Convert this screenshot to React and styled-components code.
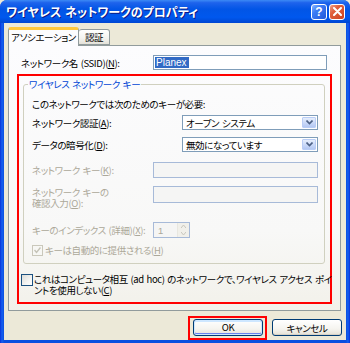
import React from 'react';
import styled, { createGlobalStyle } from 'styled-components';

const GlobalStyle = createGlobalStyle`
  html, body {
    margin: 0;
    padding: 0;
    background: #ece9d8;
  }
  body {
    font-family: "Noto Sans CJK JP", "Noto Sans", sans-serif;
    font-size: 9.5px;
    letter-spacing: -0.4px;
    word-spacing: 1px;
    font-feature-settings: "palt";
    color: #000;
  }
  * { box-sizing: border-box; }
`;

const Window = styled.div`
  width: 350px;
  height: 343px;
  display: flex;
  flex-direction: column;
  background: linear-gradient(90deg, #0831d9 0, #1560f0 2px, #0a4fe0 4px, #0a4fe0 346px, #1560f0 348px, #0831d9 350px);
  border-radius: 7px 7px 0 0;
  overflow: hidden;
`;

const TitleBar = styled.div`
  height: 23px;
  flex: none;
  display: flex;
  align-items: center;
  padding: 0 5px 0 6px;
  background: linear-gradient(180deg, #3c8af5 0%, #1e63ec 12%, #0255e6 40%, #0058ee 75%, #0046d2 100%);
`;

const Title = styled.div`
  flex: 1;
  color: #fff;
  font-size: 12px;
  font-weight: bold;
  letter-spacing: 0;
  text-shadow: 1px 1px 0 #0a1b88;
  white-space: nowrap;
`;

const CaptionButton = styled.div`
  width: 16px;
  height: 16px;
  margin-left: 2px;
  border: 1px solid #fff;
  border-radius: 3px;
  display: flex;
  align-items: center;
  justify-content: center;
  color: #fff;
  font-family: "Liberation Sans", sans-serif;
  font-weight: bold;
  font-size: 12px;
  letter-spacing: 0;
  background: ${({ $close }) =>
    $close
      ? 'linear-gradient(135deg, #f0a08a 0%, #e0603d 35%, #cc4220 100%)'
      : 'linear-gradient(135deg, #8cb8ff 0%, #3b7cf6 35%, #2358d8 100%)'};
`;

const Body = styled.div`
  flex: 1;
  margin: 0 4px 3px 4px;
  background: #ece9d8;
  padding: 5px 0 0 4px;
  display: flex;
  flex-direction: column;
`;

const TabRow = styled.div`
  height: 17px;
  display: flex;
  align-items: flex-end;
`;

const Tab = styled.div`
  position: relative;
  z-index: ${({ $active }) => ($active ? 1 : 0)};
  width: ${({ $active }) => ($active ? '71px' : '31px')};
  height: ${({ $active }) => ($active ? '19px' : '16px')};
  margin-bottom: ${({ $active }) => ($active ? '-1px' : '0')};
  padding: 1px 0 0 0;
  text-align: center;
  border: 1px solid #919b9c;
  border-bottom: ${({ $active }) => ($active ? 'none' : '1px solid #919b9c')};
  border-left: ${({ $active }) => ($active ? '1px solid #919b9c' : 'none')};
  border-top: ${({ $active }) => ($active ? '3px solid #ffc83c' : '1px solid #919b9c')};
  border-radius: 3px 3px 0 0;
  background: ${({ $active }) => ($active ? '#fcfcfe' : 'linear-gradient(180deg, #fff 0%, #f3f3ef 60%, #e3e1d8 100%)')};
  line-height: 13px;
  white-space: nowrap;
`;

const Panel = styled.div`
  width: 333px;
  height: 266px;
  border: 1px solid #919b9c;
  background: linear-gradient(180deg, #fcfcfe 0%, #f8f8f7 70%, #f2f1ea 100%);
  padding: 9px 8px 6px 8px;
  display: flex;
  flex-direction: column;
`;

const SsidRow = styled.div`
  display: flex;
  align-items: center;
  height: 15px;
  padding: 0 5px 0 4px;
`;

const Label = styled.div`
  width: ${({ $w }) => $w}px;
  flex: none;
  white-space: nowrap;
  line-height: ${({ $lh }) => $lh || 12}px;
  color: ${({ $disabled }) => ($disabled ? '#aca899' : '#000')};
  padding-top: ${({ $pt }) => $pt || 0}px;
`;

const TextBox = styled.div`
  flex: ${({ $w }) => ($w ? 'none' : '1')};
  width: ${({ $w }) => ($w ? `${$w}px` : 'auto')};
  height: ${({ $h }) => $h || 16}px;
  border: 1px solid ${({ $disabled }) => ($disabled ? '#a7bad8' : '#7f9db9')};
  background: ${({ $disabled }) => ($disabled ? '#f5f5f4' : '#fff')};
  display: flex;
  align-items: center;
  padding-left: 1px;
`;

const Selected = styled.span`
  background: #316ac5;
  color: #fff;
  padding: 0 2px 0 1px;
  line-height: 11px;
  font-family: "Liberation Sans", sans-serif;
  font-size: 10px;
  letter-spacing: 0;
`;

const RedBox = styled.div`
  flex: 1;
  margin-top: 4px;
  border: 2px solid #ff0000;
  padding: 2px 5px 0 4px;
  display: flex;
  flex-direction: column;
`;

const Group = styled.fieldset`
  margin: 0;
  padding: 0 6px 7px 8px;
  border: 1px solid #d0d0bf;
  border-radius: 3px;
  display: flex;
  flex-direction: column;
`;

const Legend = styled.legend`
  margin-left: -4px;
  padding: 0 1px;
  color: #0046d5;
  line-height: 12px;
`;

const Intro = styled.div`
  margin-top: 8px;
  line-height: 12px;
  white-space: nowrap;
`;

const Row = styled.div`
  display: flex;
  align-items: ${({ $top }) => ($top ? 'flex-start' : 'center')};
  margin-top: ${({ $mt }) => $mt}px;
`;

const Select = styled.div`
  flex: 1;
  height: 15px;
  border: 1px solid #7f9db9;
  background: #fff;
  display: flex;
  align-items: center;
  padding: 1px 1px 1px 3px;
`;

const SelectText = styled.div`
  flex: 1;
  line-height: 12px;
  white-space: nowrap;
`;

const ArrowBtn = styled.div`
  width: 14px;
  height: 100%;
  border: 1px solid #b9cdf6;
  border-radius: 1px;
  background: linear-gradient(180deg, #e6eefc 0%, #c7d7f8 60%, #b4c8f3 100%);
  display: flex;
  align-items: center;
  justify-content: center;
`;

const SpinValue = styled.span`
  color: #aca899;
  padding-left: 3px;
  font-family: "Liberation Sans", sans-serif;
  letter-spacing: 0;
`;

const SpinArrows = styled.div`
  margin-left: auto;
  width: 12px;
  height: 100%;
  border-left: 1px solid #e8e7e0;
  display: flex;
  flex-direction: column;
  align-items: center;
  justify-content: space-around;
  background: #f1f0ea;
`;

const CheckRow = styled.div`
  display: flex;
  align-items: ${({ $top }) => ($top ? 'flex-start' : 'center')};
  margin-top: ${({ $mt }) => $mt}px;
  margin-left: ${({ $ml }) => $ml || 0}px;
  color: ${({ $disabled }) => ($disabled ? '#aca899' : '#000')};
`;

const CheckBox = styled.div`
  width: ${({ $s }) => $s}px;
  height: ${({ $s }) => $s}px;
  flex: none;
  border: 1px solid ${({ $disabled }) => ($disabled ? '#cac8bb' : '#1c5180')};
  background: ${({ $disabled }) => ($disabled ? '#f7f7f4' : 'linear-gradient(135deg, #dcdcd7 0%, #f4f4f2 60%, #fff 100%)')};
  display: flex;
  align-items: center;
  justify-content: center;
  margin-right: ${({ $mr }) => $mr}px;
`;

const CheckText = styled.div`
  line-height: ${({ $lh }) => $lh}px;
  white-space: nowrap;
`;

const ButtonRow = styled.div`
  display: flex;
  justify-content: flex-end;
  align-items: center;
  gap: 5px;
  margin-top: 5px;
  padding-right: 4px;
  height: 23px;
`;

const Highlight = styled.div`
  border: 2px solid #ff0000;
  padding: 1px 2px 2px 3px;
`;

const Button = styled.div`
  width: 70px;
  height: 17px;
  border: 1px solid #003c74;
  border-radius: 3px;
  background: linear-gradient(180deg, #ffffff 0%, #f5f4ef 60%, #e4e1d6 100%);
  box-shadow: ${({ $default }) =>
    $default ? 'inset 0 0 0 1px #cee7ff, inset 0 -1px 0 1px #6982ee, inset 0 1px 0 1px #cee7ff' : 'inset 0 -1px 0 #d6d0c5'};
  display: flex;
  align-items: center;
  justify-content: center;
  line-height: 12px;
`;

const Chevron = () => (
  <svg width="7" height="5" viewBox="0 0 7 5">
    <path d="M0.5 0.5 L3.5 3.5 L6.5 0.5" fill="none" stroke="#4d6185" strokeWidth="1.6" />
  </svg>
);

const Check = ({ color }) => (
  <svg width="7" height="7" viewBox="0 0 7 7">
    <path d="M0.5 3 L2.5 5.5 L6.5 0.5" fill="none" stroke={color} strokeWidth="1.4" />
  </svg>
);

const SpinTri = ({ up }) => (
  <svg width="5" height="3" viewBox="0 0 5 3">
    <path d={up ? 'M0 3 L2.5 0 L5 3' : 'M0 0 L2.5 3 L5 0'} fill="none" stroke="#c8c6bc" strokeWidth="1" />
  </svg>
);

export default function App() {
  return (
    <>
      <GlobalStyle />
      <Window>
        <TitleBar>
          <Title>ワイヤレス ネットワークのプロパティ</Title>
          <CaptionButton>?</CaptionButton>
          <CaptionButton $close>
            <svg width="9" height="9" viewBox="0 0 9 9">
              <path d="M1 1 L8 8 M8 1 L1 8" stroke="#fff" strokeWidth="2" strokeLinecap="round" />
            </svg>
          </CaptionButton>
        </TitleBar>
        <Body>
          <TabRow>
            <Tab $active>アソシエーション</Tab>
            <Tab>認証</Tab>
          </TabRow>
          <Panel>
            <SsidRow>
              <Label $w={132}>ネットワーク名 (SSID)(<u>N</u>):</Label>
              <TextBox $h={15}>
                <Selected>Planex</Selected>
              </TextBox>
            </SsidRow>
            <RedBox>
              <Group>
                <Legend>ワイヤレス ネットワーク キー</Legend>
                <Intro>このネットワークでは次のためのキーが必要:</Intro>
                <Row $mt={5}>
                  <Label $w={150}>ネットワーク認証(<u>A</u>):</Label>
                  <Select>
                    <SelectText>オープン システム</SelectText>
                    <ArrowBtn><Chevron /></ArrowBtn>
                  </Select>
                </Row>
                <Row $mt={7}>
                  <Label $w={150}>データの暗号化(<u>D</u>):</Label>
                  <Select>
                    <SelectText>無効になっています</SelectText>
                    <ArrowBtn><Chevron /></ArrowBtn>
                  </Select>
                </Row>
                <Row $mt={10}>
                  <Label $w={121} $disabled>ネットワーク キー(<u>K</u>):</Label>
                  <TextBox $disabled $h={16} />
                </Row>
                <Row $mt={8} $top>
                  <Label $w={121} $disabled $lh={11} $pt={1}>
                    ネットワーク キーの<br />確認入力(<u>O</u>):
                  </Label>
                  <TextBox $disabled $h={17} />
                </Row>
                <Row $mt={13}>
                  <Label $w={121} $disabled>キーのインデックス (詳細)(<u>X</u>):</Label>
                  <TextBox $disabled $w={37} $h={16}>
                    <SpinValue>1</SpinValue>
                    <SpinArrows>
                      <SpinTri up />
                      <SpinTri />
                    </SpinArrows>
                  </TextBox>
                </Row>
                <CheckRow $mt={7} $disabled>
                  <CheckBox $s={11} $mr={2} $disabled>
                    <Check color="#c4c2b6" />
                  </CheckBox>
                  <CheckText $lh={11}>キーは自動的に提供される(<u>H</u>)</CheckText>
                </CheckRow>
              </Group>
              <CheckRow $mt={10} $ml={-2} $top>
                <CheckBox $s={12} $mr={1} />
                <CheckText $lh={10.5}>
                  これはコンピュータ相互 (ad hoc) のネットワークで、ワイヤレス アクセス ポイ<br />
                  ントを使用しない(<u>C</u>)
                </CheckText>
              </CheckRow>
            </RedBox>
          </Panel>
          <ButtonRow>
            <Highlight>
              <Button $default>OK</Button>
            </Highlight>
            <Button>キャンセル</Button>
          </ButtonRow>
        </Body>
      </Window>
    </>
  );
}
